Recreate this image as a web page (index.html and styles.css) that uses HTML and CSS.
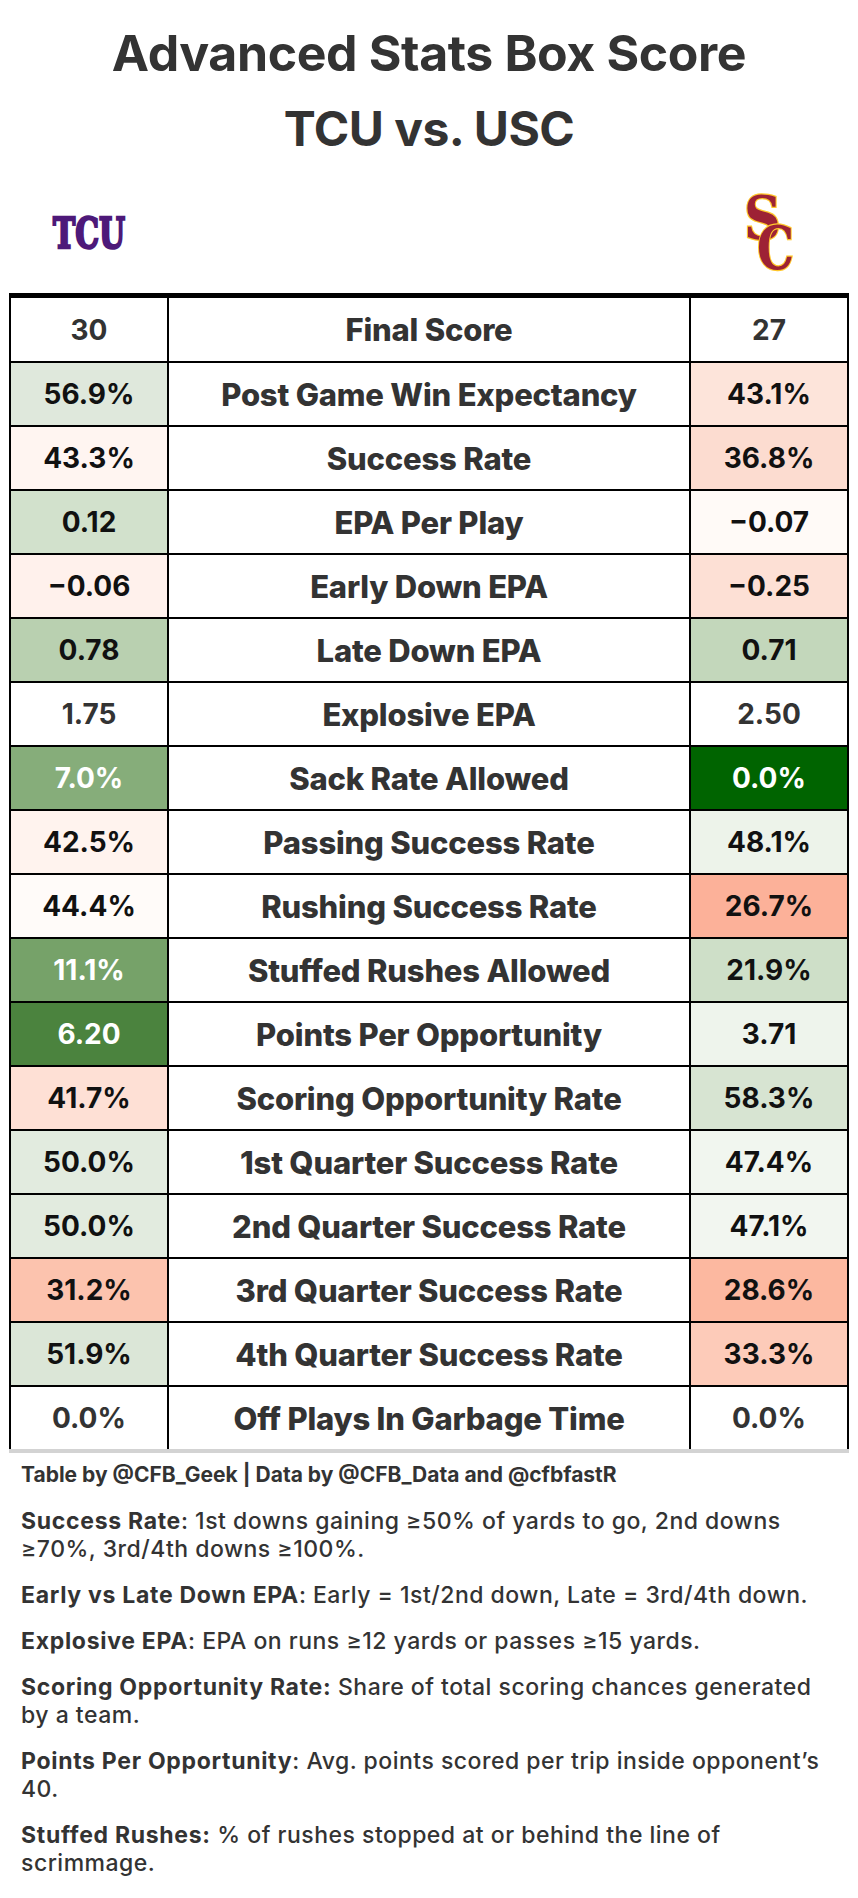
FILE: index.html
```html
<!DOCTYPE html>
<html lang="en">
<head>
<meta charset="utf-8">
<title>Advanced Stats Box Score</title>
<link rel="stylesheet" href="styles.css">
</head>
<body>
<div class="page">
  <header class="title">
    <h1>Advanced Stats Box Score</h1>
    <h1 class="sub">TCU vs. USC</h1>
  </header>

  <div class="logos">
    <div class="logo-cell">
      <svg class="tcu" width="110" height="56" viewBox="0 -10 110 56" aria-label="TCU">
        <text x="55" y="34" text-anchor="middle" textLength="72" lengthAdjust="spacingAndGlyphs" class="tcu-text">TCU</text>
      </svg>
    </div>
    <div></div>
    <div class="logo-cell">
      <svg class="sc" width="76" height="100" viewBox="-11 -10 76 100" aria-label="SC">
        <text x="2" y="47" textLength="37" lengthAdjust="spacingAndGlyphs" class="sc-text">S</text>
        <text x="15" y="77" textLength="37" lengthAdjust="spacingAndGlyphs" class="sc-text">C</text>
      </svg>
    </div>
  </div>

  <div class="box">
    <div class="row first"><div class="cell val">30</div><div class="cell label">Final Score</div><div class="cell val">27</div></div>
    <div class="row"><div class="cell val dark" style="background:#dfe8dc">56.9%</div><div class="cell label">Post Game Win Expectancy</div><div class="cell val dark" style="background:#fde4da">43.1%</div></div>
    <div class="row"><div class="cell val dark" style="background:#fff5f1">43.3%</div><div class="cell label">Success Rate</div><div class="cell val dark" style="background:#fcdcd0">36.8%</div></div>
    <div class="row"><div class="cell val dark" style="background:#d2e1cc">0.12</div><div class="cell label">EPA Per Play</div><div class="cell val dark" style="background:#fffaf7">−0.07</div></div>
    <div class="row"><div class="cell val dark" style="background:#fff1ec">−0.06</div><div class="cell label">Early Down EPA</div><div class="cell val dark" style="background:#fde0d5">−0.25</div></div>
    <div class="row"><div class="cell val dark" style="background:#b9d0b0">0.78</div><div class="cell label">Late Down EPA</div><div class="cell val dark" style="background:#c3d7bb">0.71</div></div>
    <div class="row"><div class="cell val">1.75</div><div class="cell label">Explosive EPA</div><div class="cell val">2.50</div></div>
    <div class="row"><div class="cell val light" style="background:#86ad7a">7.0%</div><div class="cell label">Sack Rate Allowed</div><div class="cell val light" style="background:#006400">0.0%</div></div>
    <div class="row"><div class="cell val dark" style="background:#fff3ee">42.5%</div><div class="cell label">Passing Success Rate</div><div class="cell val dark" style="background:#edf3ea">48.1%</div></div>
    <div class="row"><div class="cell val dark" style="background:#fffbf9">44.4%</div><div class="cell label">Rushing Success Rate</div><div class="cell val dark" style="background:#fcb199">26.7%</div></div>
    <div class="row"><div class="cell val light" style="background:#76a269">11.1%</div><div class="cell label">Stuffed Rushes Allowed</div><div class="cell val dark" style="background:#cedfc8">21.9%</div></div>
    <div class="row"><div class="cell val light" style="background:#4b833e">6.20</div><div class="cell label">Points Per Opportunity</div><div class="cell val dark" style="background:#eef4ec">3.71</div></div>
    <div class="row"><div class="cell val dark" style="background:#fee0d5">41.7%</div><div class="cell label">Scoring Opportunity Rate</div><div class="cell val dark" style="background:#d7e4d2">58.3%</div></div>
    <div class="row"><div class="cell val dark" style="background:#e2ebdf">50.0%</div><div class="cell label">1st Quarter Success Rate</div><div class="cell val dark" style="background:#f1f6ef">47.4%</div></div>
    <div class="row"><div class="cell val dark" style="background:#e2ebdf">50.0%</div><div class="cell label">2nd Quarter Success Rate</div><div class="cell val dark" style="background:#f2f6f0">47.1%</div></div>
    <div class="row"><div class="cell val dark" style="background:#fcc3ae">31.2%</div><div class="cell label">3rd Quarter Success Rate</div><div class="cell val dark" style="background:#fcb8a0">28.6%</div></div>
    <div class="row"><div class="cell val dark" style="background:#dbe6d7">51.9%</div><div class="cell label">4th Quarter Success Rate</div><div class="cell val dark" style="background:#fdcbb9">33.3%</div></div>
    <div class="row last"><div class="cell val">0.0%</div><div class="cell label">Off Plays In Garbage Time</div><div class="cell val">0.0%</div></div>
  </div>
  <div class="box-end"></div>

  <footer class="notes">
    <p class="credit">Table by @CFB_Geek | Data by @CFB_Data and @cfbfastR</p>
    <p><b>Success Rate</b>: 1st downs gaining ≥50% of yards to go, 2nd downs<br>≥70%, 3rd/4th downs ≥100%.</p>
    <p><b>Early vs Late Down EPA</b>: Early = 1st/2nd down, Late = 3rd/4th down.</p>
    <p><b>Explosive EPA</b>: EPA on runs ≥12 yards or passes ≥15 yards.</p>
    <p><b>Scoring Opportunity Rate:</b> Share of total scoring chances generated<br>by a team.</p>
    <p><b>Points Per Opportunity</b>: Avg. points scored per trip inside opponent’s<br>40.</p>
    <p><b>Stuffed Rushes:</b> % of rushes stopped at or behind the line of<br>scrimmage.</p>
  </footer>
</div>
</body>
</html>
```

FILE: styles.css
```css
* { box-sizing: border-box; }

html, body {
  margin: 0;
  padding: 0;
  background: #ffffff;
}

body {
  font-family: "Inter", "Roboto", "Liberation Sans", sans-serif;
  color: #333333;
}

.page {
  width: 858px;
}

.title {
  padding-top: 16px;
  text-align: center;
}

.title h1 {
  margin: 0;
  font-size: 50px;
  line-height: 75px;
  font-weight: 700;
  color: #333333;
  letter-spacing: -0.4px;
}

.title h1.sub {
  font-size: 48px;
  letter-spacing: -0.5px;
}

.logos {
  margin: 0 9px;
  padding: 5px 2px 0;
  height: 127px;
  display: grid;
  grid-template-columns: 156px 524px 156px;
  align-items: center;
}

.logo-cell {
  display: flex;
  justify-content: center;
  align-items: center;
  height: 122px;
}

.tcu-text {
  font-family: "DejaVu Serif", serif;
  font-weight: 700;
  font-size: 42px;
  fill: #4d1979;
  stroke: #4d1979;
  stroke-width: 2.5px;
  stroke-linejoin: miter;
}

.sc-text {
  font-family: "DejaVu Serif", serif;
  font-weight: 700;
  font-size: 60px;
  fill: #9d2235;
  stroke: #ffc72c;
  stroke-width: 2.5px;
  paint-order: stroke;
}

.box {
  margin: 0 9px;
  width: 840px;
  background: #000000;
  padding: 5px 2px 0;
  display: grid;
  row-gap: 2px;
}

.row {
  display: grid;
  grid-template-columns: 156px 520px 156px;
  column-gap: 2px;
  height: 62px;
}

.row.first {
  height: 63px;
}

.cell {
  background: #ffffff;
  display: flex;
  align-items: center;
  justify-content: center;
  font-size: 28px;
  font-weight: 700;
  color: #333333;
  white-space: nowrap;
}

.cell.label {
  font-size: 31px;
  font-weight: 800;
  letter-spacing: -0.2px;
}

.cell.dark { color: #111111; }
.cell.light { color: #ffffff; }

.box-end {
  margin: 0 9px;
  width: 840px;
  height: 4px;
  background: #d3d3d3;
}

.notes {
  padding: 8px 0 0 21px;
  width: 858px;
}

.notes p {
  margin: 0 0 18px;
  font-size: 23px;
  line-height: 28px;
  font-weight: 500;
  letter-spacing: 0.5px;
  color: #333333;
  white-space: nowrap;
}

.notes p.credit {
  font-size: 21px;
  font-weight: 700;
  letter-spacing: 0;
}

.notes b {
  font-weight: 700;
  letter-spacing: 0.7px;
}
```
